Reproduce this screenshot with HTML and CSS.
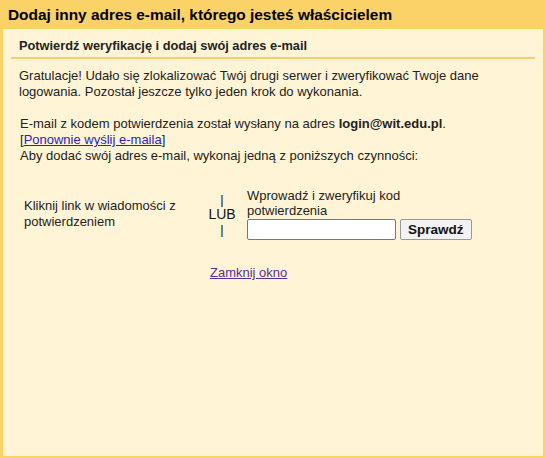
FILE: index.html
```html
<!DOCTYPE html>
<html lang="pl">
<head>
<meta charset="utf-8">
<title>Dodaj inny adres e-mail</title>
<link rel="stylesheet" href="styles.css">
</head>
<body>
<div class="dialog">
  <div class="header">Dodaj inny adres e-mail, którego jesteś właścicielem</div>
  <div class="panel">
    <div class="panel-head">Potwierdź weryfikację i dodaj swój adres e-mail</div>
    <div class="content">
      <p class="intro">Gratulacje! Udało się zlokalizować Twój drugi serwer i zweryfikować Twoje dane logowania. Pozostał jeszcze tylko jeden krok do wykonania.</p>
      <p class="info">E-mail z kodem potwierdzenia został wysłany na adres <b>login@wit.edu.pl</b>.<br>[<a class="link" href="#">Ponownie wyślij e-maila</a>]<br>Aby dodać swój adres e-mail, wykonaj jedną z poniższych czynności:</p>
      <div class="options">
        <div class="opt-left">Kliknij link w wiadomości z potwierdzeniem</div>
        <div class="opt-or"><span>|</span><span class="lub">LUB</span><span>|</span></div>
        <div class="opt-right">
          <div class="opt-label">Wprowadź i zweryfikuj kod potwierdzenia</div>
          <div class="verify-row">
            <input class="code" type="text">
            <button class="check">Sprawdź</button>
          </div>
        </div>
      </div>
      <div class="close-row"><a class="close" href="#">Zamknij okno</a></div>
    </div>
  </div>
</div>
</body>
</html>
```
FILE: styles.css
```css
html, body {
  margin: 0;
  padding: 0;
  height: 100%;
}
body {
  background: #fad267;
  font-family: "Liberation Sans", Arial, sans-serif;
  font-size: 13px;
  color: #222;
}
.dialog {
  display: flex;
  flex-direction: column;
  height: 100%;
  box-sizing: border-box;
  padding: 0 2px 2px 3px;
}
.header {
  font-weight: bold;
  font-size: 15.4px;
  color: #000;
  height: 29px;
  line-height: 29px;
  padding-left: 5px;
  box-sizing: border-box;
}
.panel {
  flex: 1;
  background: #fff5d6;
}
.panel-head {
  margin: 0 8px;
  padding: 9px 8px 0;
  height: 30px;
  box-sizing: border-box;
  font-weight: bold;
  font-size: 12.8px;
  color: #222;
  border-bottom: 2px solid #f7cf68;
}
.content {
  padding: 0 16px;
  line-height: 16px;
}
.intro {
  margin: 9px 0 0;
}
.info {
  margin: 16px 0 0;
  padding-left: 1px;
}
.link {
  color: #2a23b5;
}
.options {
  display: grid;
  grid-template-columns: 182px 46px auto;
  align-items: center;
  margin-top: 24px;
}
.opt-left {
  padding-left: 5px;
}
.opt-or {
  display: flex;
  flex-direction: column;
  align-items: center;
  font-size: 13px;
  line-height: 15px;
  color: #111;
  padding-right: 4px;
}
.opt-or .lub {
  font-size: 14px;
}
.opt-label {
  width: 160px;
  line-height: 15px;
}
.verify-row {
  display: flex;
  gap: 4px;
  margin-top: 1px;
}
.code {
  width: 149px;
  height: 21px;
  box-sizing: border-box;
  border: 1px solid #777;
  border-radius: 2px;
  background: #fff;
  padding: 0 3px;
  margin: 0;
}
.check {
  height: 21px;
  box-sizing: border-box;
  border: 1px solid #999;
  border-radius: 2px;
  background: #f2f2f2;
  font-family: "Liberation Sans", Arial, sans-serif;
  font-weight: bold;
  font-size: 13.5px;
  color: #111;
  padding: 0 7px;
  margin: 0;
}
.close-row {
  margin-top: 25px;
  padding-left: 191px;
}
.close {
  color: #5b2d8e;
}
```
